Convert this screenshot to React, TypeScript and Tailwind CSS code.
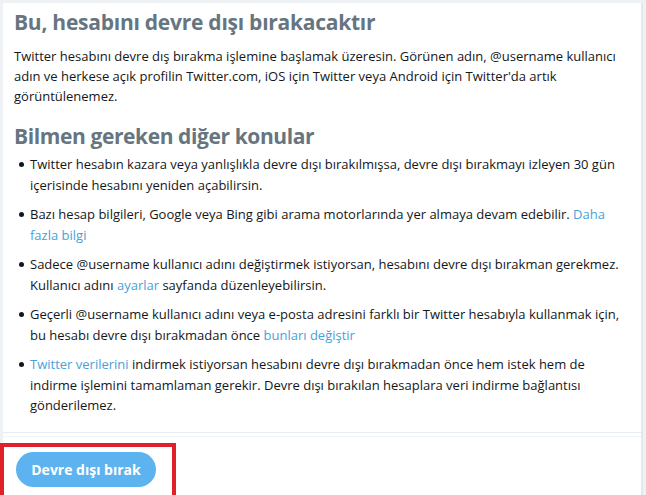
const LINK = 'text-[#4a9fd8]';

type Item = { key: string; lines: React.ReactNode[] };

const items: Item[] = [
  {
    key: 'reopen',
    lines: [
      'Twitter hesabın kazara veya yanlışlıkla devre dışı bırakılmışsa, devre dışı bırakmayı izleyen 30 gün',
      'içerisinde hesabını yeniden açabilirsin.',
    ],
  },
  {
    key: 'search',
    lines: [
      <>
        Bazı hesap bilgileri, Google veya Bing gibi arama motorlarında yer almaya devam edebilir.{' '}
        <a className={LINK}>Daha</a>
      </>,
      <a className={LINK}>fazla bilgi</a>,
    ],
  },
  {
    key: 'username',
    lines: [
      'Sadece @username kullanıcı adını değiştirmek istiyorsan, hesabını devre dışı bırakman gerekmez.',
      <>
        Kullanıcı adını <a className={LINK}>ayarlar</a> sayfanda düzenleyebilirsin.
      </>,
    ],
  },
  {
    key: 'email',
    lines: [
      'Geçerli @username kullanıcı adını veya e-posta adresini farklı bir Twitter hesabıyla kullanmak için,',
      <>
        bu hesabı devre dışı bırakmadan önce <a className={LINK}>bunları değiştir</a>
      </>,
    ],
  },
  {
    key: 'data',
    lines: [
      <>
        <a className={LINK}>Twitter verilerini</a> indirmek istiyorsan hesabını devre dışı bırakmadan önce hem
        istek hem de
      </>,
      'indirme işlemini tamamlaman gerekir. Devre dışı bırakılan hesaplara veri indirme bağlantısı',
      'gönderilemez.',
    ],
  },
];

export default function App() {
  return (
    <div className="h-[495px] w-[646px] overflow-hidden bg-[#eef2f4] pl-[3px] pt-[3px] font-['Open_Sans',sans-serif]">
      <div className="h-full w-[640px] border-r-2 border-[#e3e8eb] bg-white">
        <section className="px-[11px] pt-[3px] pb-[16px]">
          <h1 className="text-[21px] font-bold leading-[32px] tracking-[-0.25px] text-[#66757f]">
            Bu, hesabını devre dışı bırakacaktır
          </h1>
          <p className="mt-[8px] whitespace-nowrap text-[13px] leading-[20px] text-[#14171a]">
            Twitter hesabını devre dış bırakma işlemine başlamak üzeresin. Görünen adın, @username kullanıcı
            <br />
            adın ve herkese açık profilin Twitter.com, iOS için Twitter veya Android için Twitter'da artık
            <br />
            görüntülenemez.
          </p>

          <h2 className="mt-[14px] text-[21px] font-bold leading-[32px] tracking-[-0.4px] text-[#66757f]">
            Bilmen gereken diğer konular
          </h2>
          <ul className="mt-[2px] flex flex-col gap-[9px] pl-[5px]">
            {items.map((item) => (
              <li key={item.key} className="flex text-[13px] leading-[20.5px] text-[#14171a]">
                <span className="mt-[8px] mr-[6px] h-[5px] w-[5px] shrink-0 rounded-full bg-[#14171a]" />
                <span className="whitespace-nowrap">
                  {item.lines.map((line, i) => (
                    <span key={i} className="block">
                      {line}
                    </span>
                  ))}
                </span>
              </li>
            ))}
          </ul>
        </section>

        <div className="border-t border-[#e6ecf0] pt-[3px]">
          <div className="border-t border-[#f3f5f7]" />
        </div>

        <div className="relative pl-[13px] pt-[15px]">
          <div className="pointer-events-none absolute left-[-3px] top-[6px] h-[60px] w-[176px] border-[4px] border-[#e0202a]" />
          <button className="h-[35px] w-[140px] rounded-full bg-[#5cb3ef] text-[14px] font-bold text-white">
            Devre dışı bırak
          </button>
        </div>
      </div>
    </div>
  );
}
